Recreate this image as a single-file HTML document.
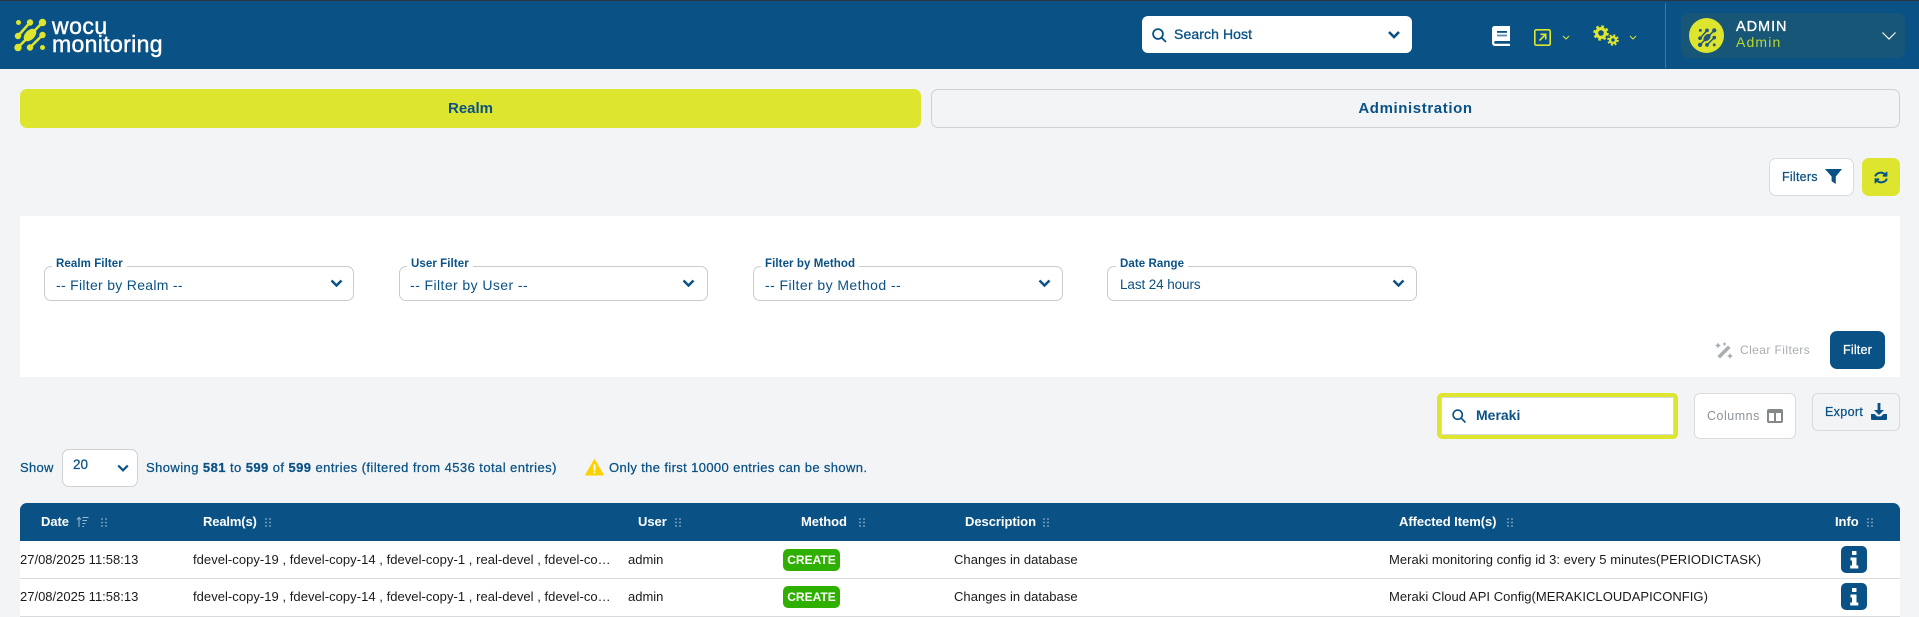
<!DOCTYPE html>
<html><head><meta charset="utf-8"><title>WOCU Monitoring</title>
<style>
*{box-sizing:border-box}
html,body{margin:0;padding:0;width:1919px;height:617px;overflow:hidden;background:#f3f4f6}
body{position:relative;font-family:"Liberation Sans",sans-serif;color:#0a5286}
.a{position:absolute}
.t{position:absolute;line-height:20px;white-space:nowrap;font-size:13px;color:#0a5286}
.m{-webkit-text-stroke:.25px currentColor}
svg{position:absolute;overflow:visible}
.sel{position:absolute;top:266px;height:35px;width:310px;border:1px solid #c9cbce;border-radius:7px;background:#fff}
.lab{position:absolute;top:254px;line-height:20px;height:20px;padding:0 4px;background:#fff;font-size:11.5px;font-weight:bold;letter-spacing:.08px;white-space:nowrap;color:#0a5286}
.val{top:275px;font-size:14px;letter-spacing:.3px}
.th{top:512px;color:#fff;font-size:13px;font-weight:bold;letter-spacing:-.05px}
.td{font-size:13px;color:#1a1a1a}
.l{letter-spacing:.04px}
.badge{position:absolute;left:783px;width:57px;height:22px;border-radius:5px;background:#2fb000;color:#fff;font-size:12px;font-weight:bold;text-align:center;line-height:22px}
.inf{position:absolute;left:1841px;width:26px;height:27px;border-radius:5px;background:#0a5286}
.inf svg{left:0;top:0}
</style></head><body>
<svg width="0" height="0" style="position:absolute"><defs>
<g id="logo"><circle cx="18.5" cy="22.5" r="2.5"/><circle cx="30" cy="22.5" r="3.2"/><circle cx="18" cy="36" r="3.2"/><circle cx="42.5" cy="22.5" r="3.7"/><circle cx="18" cy="47.5" r="3.7"/><ellipse cx="30" cy="35" rx="7.5" ry="4.8" transform="rotate(-45 30 35)"/><circle cx="42.5" cy="35" r="3.2"/><circle cx="30" cy="47.5" r="3.2"/><circle cx="42.5" cy="47.5" r="2.5"/><path d="M30 22.5 18 36M42.5 22.5 18 47.5M42.5 35 30 47.5" stroke-width="2.6" fill="none" style="stroke:inherit"/></g>
<g id="dots"><circle cx="1" cy="1" r=".9"/><circle cx="5" cy="1" r=".9"/><circle cx="1" cy="4.5" r=".9"/><circle cx="5" cy="4.5" r=".9"/><circle cx="1" cy="8" r=".9"/><circle cx="5" cy="8" r=".9"/></g>
<g id="ii"><rect x="11" y="5" width="4.5" height="4" fill="#fff" rx=".6"/><path d="M9.5 11.5h6v8h1.8v3H9.2v-3h1.8v-5H9.5z" fill="#fff"/></g>
</defs></svg>

<!-- header -->
<div class="a" style="left:0;top:0;width:1919px;height:69px;background:#0a5286"></div>
<div class="a" style="left:0;top:0;width:1919px;height:1px;background:#2b3440"></div>
<svg style="left:0;top:0" width="60" height="69" fill="#dde52e" stroke="#dde52e"><use href="#logo" stroke="#dde52e" stroke-width="0"/></svg>
<div class="t" style="left:52px;top:16px;font-size:23px;color:#fff;letter-spacing:.5px;line-height:20px;-webkit-text-stroke:.45px #fff">wocu</div>
<div class="t" style="left:52px;top:34px;font-size:23px;color:#fff;letter-spacing:.35px;line-height:20px;-webkit-text-stroke:.45px #fff">monitoring</div>

<div class="a" style="left:1142px;top:16px;width:270px;height:37px;background:#fff;border-radius:6px"></div>
<svg style="left:1152px;top:28px" width="16" height="16" fill="none" stroke="#0a5286" stroke-width="1.8"><circle cx="6" cy="6" r="4.9"/><path d="M9.6 9.6 13.5 13.5" stroke-linecap="round"/></svg>
<div class="t" style="left:1174px;top:24px;font-size:14px;letter-spacing:.1px;-webkit-text-stroke:.35px #0a5286">Search Host</div>
<svg style="left:1387px;top:30px" width="14" height="10" fill="none" stroke="#0a5286" stroke-width="2.6"><path d="M2 2 7 7 12 2"/></svg>

<svg style="left:1492px;top:26px" width="18" height="20"><path d="M3 0H18V15H3.5C2 15 1.5 17.8 3.5 17.8H18V20H3C1 20 0 18.5 0 16.5V3C0 1 1 0 3 0Z" fill="#fff"/><rect x="5" y="5" width="10" height="1.8" fill="#0a5286"/><rect x="5" y="8.6" width="10" height="1.8" fill="#5a8fb3"/></svg>
<svg style="left:1534px;top:29px" width="17" height="17" fill="none" stroke="#dde52e" stroke-width="1.6"><rect x=".8" y=".8" width="15.4" height="15.4" rx="1.5"/><path d="M5.5 11.5 11.5 5.5M6.5 5.3H11.7V10.5"/></svg>
<svg style="left:1562px;top:35px" width="8" height="6" fill="none" stroke="#dde52e" stroke-width="1"><path d="M1 1 4 4 7 1"/></svg>
<svg style="left:1593px;top:25px" width="27" height="22" fill="none" stroke="#dde52e"><circle cx="8" cy="8" r="4.4" stroke-width="3.2"/><circle cx="8" cy="8" r="6.6" stroke-width="2.4" stroke-dasharray="2.6 2.6"/><circle cx="20" cy="15" r="2.9" stroke-width="2.4"/><circle cx="20" cy="15" r="4.8" stroke-width="2" stroke-dasharray="2 1.8"/></svg>
<svg style="left:1629px;top:35px" width="8" height="6" fill="none" stroke="#dde52e" stroke-width="1"><path d="M1 1 4 4 7 1"/></svg>

<div class="a" style="left:1665px;top:3px;width:1px;height:65px;background:#3f7d8c"></div>
<div class="a" style="left:1681px;top:13px;width:224px;height:45px;background:#175677;border-radius:8px"></div>
<div class="a" style="left:1689px;top:18px;width:35px;height:35px;background:#dde52e;border-radius:50%"></div>
<svg style="left:1686.6px;top:14.5px" width="40" height="40" viewBox="0 0 60 69" fill="#24567c" stroke="#24567c"><g transform="translate(0 4)"><use href="#logo" stroke="#24567c" stroke-width="0"/></g></svg>
<div class="t" style="left:1736px;top:17px;font-size:14.5px;color:#fff;letter-spacing:.95px;-webkit-text-stroke:.35px #fff">ADMIN</div>
<div class="t" style="left:1736px;top:32px;font-size:14px;color:#b9d82e;letter-spacing:1.15px">Admin</div>
<svg style="left:1881px;top:31px" width="16" height="10" fill="none" stroke="#fff" stroke-width="1.2"><path d="M1.5 1.5 8 8 14.5 1.5"/></svg>

<!-- tabs -->
<div class="a" style="left:20px;top:89px;width:901px;height:39px;background:#dde52e;border-radius:7px"></div>
<div class="t" style="left:20px;width:901px;text-align:center;top:99px;font-size:15px;font-weight:bold">Realm</div>
<div class="a" style="left:931px;top:89px;width:969px;height:39px;border:1px solid #cfd1d4;border-radius:7px"></div>
<div class="t" style="left:931px;width:969px;text-align:center;top:99px;font-size:15px;font-weight:bold;letter-spacing:.6px">Administration</div>

<!-- filters buttons -->
<div class="a" style="left:1769px;top:158px;width:85px;height:38px;background:#fff;border:1px solid #dadbdd;border-radius:7px"></div>
<div class="t m" style="left:1782px;top:167px;font-size:12.5px;letter-spacing:.25px">Filters</div>
<svg style="left:1825px;top:169px" width="17" height="15" fill="#0a5286"><path d="M0 0H17L10.8 7.5V15L6.6 12.2V7.5Z"/></svg>
<div class="a" style="left:1862px;top:158px;width:38px;height:38px;background:#dde52e;border-radius:7px"></div>
<svg style="left:1874px;top:171px" width="14" height="13" fill="none" stroke="#0a5286" stroke-width="2"><path d="M1.2 5.4C2.2 1.8 7.6.2 11 3.4M12.8 7.6C11.8 11.2 6.4 12.8 3 9.6"/><path d="M12.6.8V4.8H8.8M1.4 12.2V8.2H5.2" stroke-width="1.6" fill="#0a5286"/></svg>

<!-- filter panel -->
<div class="a" style="left:20px;top:216px;width:1880px;height:161px;background:#fff"></div>
<div class="sel" style="left:44px"></div>
<div class="lab" style="left:52px">Realm Filter</div>
<div class="t val" style="left:56px">-- Filter by Realm --</div>
<svg style="left:330px;top:279px" width="13" height="9" fill="none" stroke="#0a5286" stroke-width="2.4"><path d="M1.5 1.5 6.5 6.5 11.5 1.5"/></svg>

<div class="sel" style="left:399px;width:309px"></div>
<div class="lab" style="left:407px">User Filter</div>
<div class="t val" style="left:410px;letter-spacing:.42px">-- Filter by User --</div>
<svg style="left:682px;top:279px" width="13" height="9" fill="none" stroke="#0a5286" stroke-width="2.4"><path d="M1.5 1.5 6.5 6.5 11.5 1.5"/></svg>

<div class="sel" style="left:753px"></div>
<div class="lab" style="left:761px">Filter by Method</div>
<div class="t val" style="left:765px;letter-spacing:.42px">-- Filter by Method --</div>
<svg style="left:1038px;top:279px" width="13" height="9" fill="none" stroke="#0a5286" stroke-width="2.4"><path d="M1.5 1.5 6.5 6.5 11.5 1.5"/></svg>

<div class="sel" style="left:1107px"></div>
<div class="lab" style="left:1116px">Date Range</div>
<div class="t val" style="left:1120px;font-size:13.5px;letter-spacing:-.1px;top:275px">Last 24 hours</div>
<svg style="left:1392px;top:279px" width="13" height="9" fill="none" stroke="#0a5286" stroke-width="2.4"><path d="M1.5 1.5 6.5 6.5 11.5 1.5"/></svg>

<svg style="left:1715px;top:342px" width="18" height="17" fill="#a9adb2" stroke="none"><path d="M2.5 14 13 3.5 15.5 6 5 16.5Z"/><path d="M4 1.5 5 3.5 7 4.5 5 5.5 4 7.5 3 5.5 1 4.5 3 3.5Z" transform="translate(-1 -1)"/><path d="M15 11 16 13 18 14 16 15 15 17 14 15 12 14 14 13Z"/><path d="M9.5 0 10.2 1.3 11.5 2 10.2 2.7 9.5 4 8.8 2.7 7.5 2 8.8 1.3Z"/></svg>
<div class="t" style="left:1740px;top:340px;font-size:12px;color:#a9adb2;letter-spacing:.42px">Clear Filters</div>
<div class="a" style="left:1830px;top:331px;width:55px;height:38px;background:#0a5286;border-radius:7px"></div>
<div class="t m" style="left:1843px;top:340px;font-size:12.5px;color:#fff;letter-spacing:.2px">Filter</div>

<!-- search / columns / export -->
<div class="a" style="left:1437px;top:393px;width:241px;height:46px;background:#fff;border:4px solid #dde52e;border-radius:5px;box-shadow:inset 0 0 0 1px #d8d9db"></div>
<svg style="left:1452px;top:409px" width="15" height="15" fill="none" stroke="#0a5286" stroke-width="1.6"><circle cx="5.7" cy="5.7" r="4.6"/><path d="M9.1 9.1 13 13" stroke-linecap="round"/></svg>
<div class="t" style="left:1476px;top:405px;font-size:14px;font-weight:bold;letter-spacing:0">Meraki</div>
<div class="a" style="left:1694px;top:393px;width:102px;height:46px;background:#fff;border:1px solid #dadbdd;border-radius:6px"></div>
<div class="t" style="left:1707px;top:406px;font-size:12.5px;color:#8d9399;letter-spacing:.5px">Columns</div>
<svg style="left:1767px;top:409px" width="16" height="14" fill="none" stroke="#85888b"><rect x="1" y="1" width="14" height="12" rx="1" stroke-width="2"/><path d="M1 2.5H15" stroke-width="3"/><path d="M8 2V13" stroke-width="2"/></svg>
<div class="a" style="left:1812px;top:393px;width:88px;height:38px;border:1px solid #d9dadc;border-radius:6px"></div>
<div class="t m" style="left:1825px;top:402px;font-size:12.5px;letter-spacing:.35px">Export</div>
<svg style="left:1871px;top:403px" width="16" height="17" fill="#0a5286"><path d="M6.6 0H9.4V7H13L8 12 3 7H6.6Z"/><path d="M0 11H3.6L6 13.4H10L12.4 11H16V16C16 16.6 15.6 17 15 17H1C.4 17 0 16.6 0 16Z"/></svg>

<!-- show row -->
<div class="t m" style="left:20px;top:458px;font-size:13px;letter-spacing:.3px">Show</div>
<div class="a" style="left:62px;top:449px;width:76px;height:38px;background:#fff;border:1px solid #cfd1d4;border-radius:7px"></div>
<div class="t m" style="left:73px;top:455px;font-size:13.5px">20</div>
<svg style="left:117px;top:464px" width="12" height="9" fill="none" stroke="#0a5286" stroke-width="2.2"><path d="M1.2 1.5 6 6.3 10.8 1.5"/></svg>
<div class="t m" style="left:146px;top:458px;font-size:13px;letter-spacing:.43px">Showing <b>581</b> to <b>599</b> of <b>599</b> entries (filtered from 4536 total entries)</div>
<svg style="left:585px;top:459px" width="19" height="17"><path d="M9.5 .6 18.4 16H.6Z" fill="#fdd100" stroke="#fdd100" stroke-linejoin="round"/><rect x="8.6" y="5.5" width="1.8" height="6" fill="#fff"/><rect x="8.6" y="12.6" width="1.8" height="1.8" fill="#fff"/></svg>
<div class="t m" style="left:609px;top:458px;font-size:13px;letter-spacing:.37px">Only the first 10000 entries can be shown.</div>

<!-- table -->
<div class="a" style="left:20px;top:503px;width:1880px;height:38px;background:#0a5286;border-radius:7px 7px 0 0"></div>
<div class="t th" style="left:41px">Date</div>
<svg style="left:76px;top:516px" width="13" height="12" fill="none" stroke="#9db9cf" stroke-width="1"><path d="M3 11V1.5M1 3.5 3 1.5 5 3.5M6.5 1.5H12.5M6.5 4.5H11M6.5 7.5H9.5M6.5 10.5H8"/></svg>
<svg style="left:101px;top:518px" width="6" height="9" fill="#8fb0c8"><use href="#dots"/></svg>
<div class="t th" style="left:203px;letter-spacing:-.15px">Realm(s)</div>
<svg style="left:265px;top:518px" width="6" height="9" fill="#8fb0c8"><use href="#dots"/></svg>
<div class="t th" style="left:638px">User</div>
<svg style="left:675px;top:518px" width="6" height="9" fill="#8fb0c8"><use href="#dots"/></svg>
<div class="t th" style="left:801px">Method</div>
<svg style="left:859px;top:518px" width="6" height="9" fill="#8fb0c8"><use href="#dots"/></svg>
<div class="t th" style="left:965px">Description</div>
<svg style="left:1043px;top:518px" width="6" height="9" fill="#8fb0c8"><use href="#dots"/></svg>
<div class="t th" style="left:1399px">Affected Item(s)</div>
<svg style="left:1507px;top:518px" width="6" height="9" fill="#8fb0c8"><use href="#dots"/></svg>
<div class="t th" style="left:1835px">Info</div>
<svg style="left:1867px;top:518px" width="6" height="9" fill="#8fb0c8"><use href="#dots"/></svg>

<div class="a" style="left:20px;top:541px;width:1880px;height:76px;background:#fff"></div>
<div class="a" style="left:20px;top:578px;width:1880px;height:1px;background:#d9dadc"></div>
<div class="a" style="left:20px;top:616px;width:1880px;height:1px;background:#d9dadc"></div>

<div class="t td" style="left:20px;top:550px">27/08/2025 11:58:13</div>
<div class="t td l" style="left:193px;top:550px">fdevel-copy-19 , fdevel-copy-14 , fdevel-copy-1 , real-devel , fdevel-co…</div>
<div class="t td" style="left:628px;top:550px">admin</div>
<div class="badge" style="top:549px">CREATE</div>
<div class="t td l" style="left:954px;top:550px">Changes in database</div>
<div class="t td l" style="left:1389px;top:550px">Meraki monitoring config id 3: every 5 minutes(PERIODICTASK)</div>
<div class="inf" style="top:546px"><svg width="26" height="27"><use href="#ii"/></svg></div>

<div class="t td" style="left:20px;top:587px">27/08/2025 11:58:13</div>
<div class="t td l" style="left:193px;top:587px">fdevel-copy-19 , fdevel-copy-14 , fdevel-copy-1 , real-devel , fdevel-co…</div>
<div class="t td" style="left:628px;top:587px">admin</div>
<div class="badge" style="top:586px">CREATE</div>
<div class="t td l" style="left:954px;top:587px">Changes in database</div>
<div class="t td l" style="left:1389px;top:587px">Meraki Cloud API Config(MERAKICLOUDAPICONFIG)</div>
<div class="inf" style="top:583px"><svg width="26" height="27"><use href="#ii"/></svg></div>
</body></html>
